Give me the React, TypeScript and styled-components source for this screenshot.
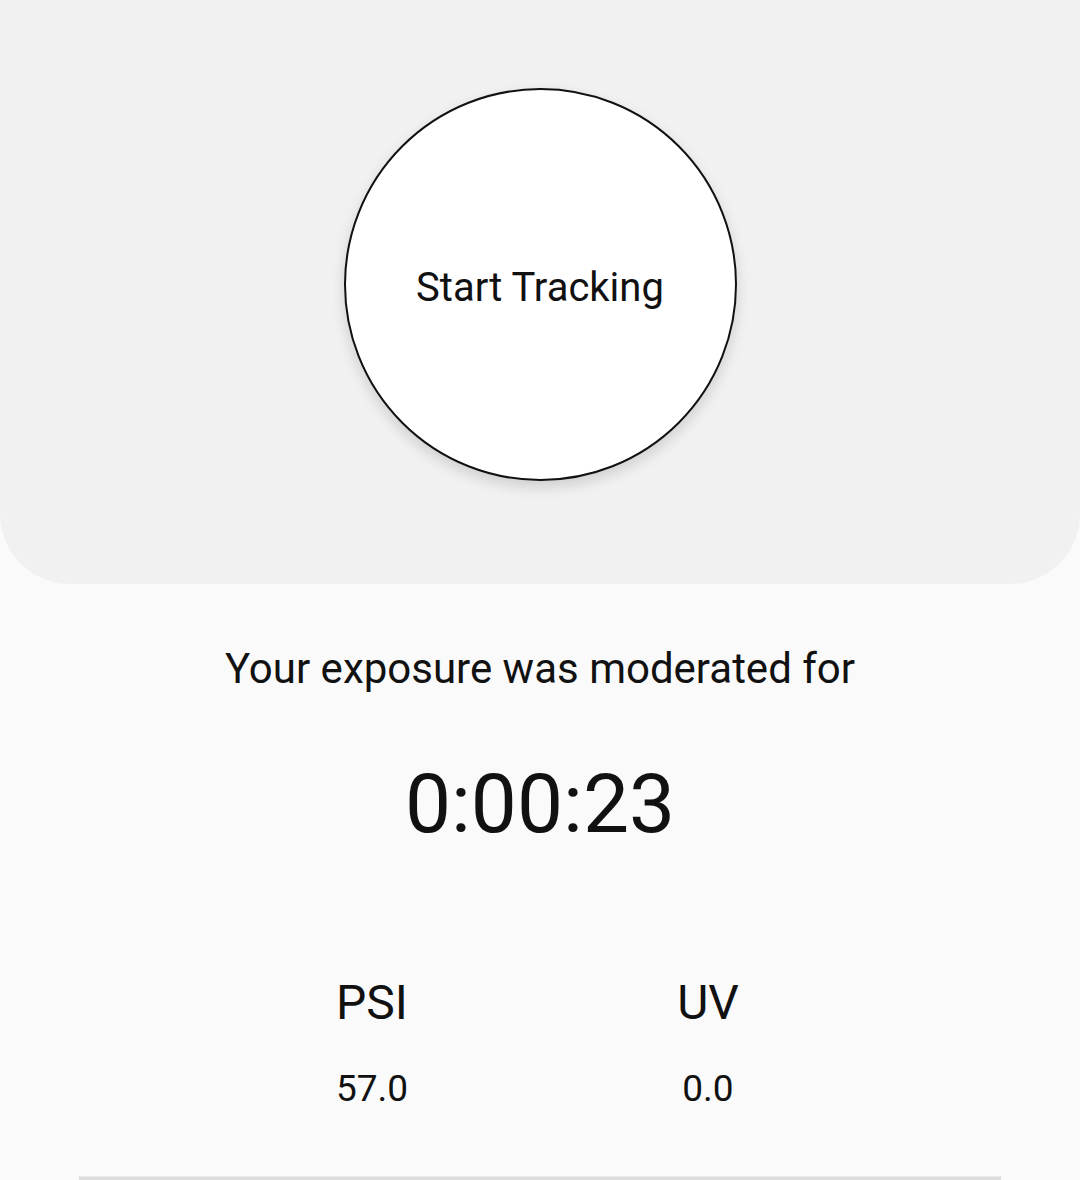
import React from "react";
import styled, { createGlobalStyle } from "styled-components";

const Global = createGlobalStyle`
  html, body { margin: 0; padding: 0; background: #fafafa; }
  body { font-family: Roboto, "Noto Sans", sans-serif; color: #111; }
`;

const Page = styled.div`
  width: 1080px;
  height: 1180px;
  display: flex;
  flex-direction: column;
  background: #fafafa;
  overflow: hidden;
`;

const TopPanel = styled.section`
  height: 584px;
  background: #f1f1f1;
  border-radius: 0 0 70px 70px;
  display: flex;
  justify-content: center;
  padding-top: 88px;
  box-sizing: border-box;
`;

const StartButton = styled.button`
  width: 393px;
  height: 393px;
  border-radius: 50%;
  background: #fff;
  border: 2px solid #111;
  box-shadow: 0 6px 14px rgba(0, 0, 0, 0.14);
  font-family: Roboto, sans-serif;
  font-size: 40px;
  color: #111;
  padding: 6px 0 0;
  cursor: pointer;
`;

const Message = styled.p`
  margin: 60px 0 0;
  text-align: center;
  font-size: 42px;
  line-height: 50px;
  color: #111;
`;

const Timer = styled.div`
  margin-top: 62px;
  text-align: center;
  font-size: 82px;
  line-height: 96px;
  color: #111;
`;

const Stats = styled.div`
  margin-top: 123px;
  display: flex;
  justify-content: center;
`;

const Stat = styled.div`
  width: 336px;
  display: flex;
  flex-direction: column;
  align-items: center;
`;

const StatLabel = styled.div`
  font-size: 48px;
  line-height: 56px;
  color: #111;
`;

const StatValue = styled.div`
  margin-top: 36px;
  font-size: 37px;
  line-height: 44px;
  color: #111;
`;

const Spacer = styled.div`
  flex: 1;
`;

const BottomRule = styled.div`
  margin: 0 79px;
  height: 3px;
  border-top: 1px solid #ececec;
  background: #dcdcdc;
`;

export default function App() {
  return (
    <Page>
      <Global />
      <TopPanel>
        <StartButton>Start Tracking</StartButton>
      </TopPanel>
      <Message>Your exposure was moderated for</Message>
      <Timer>0:00:23</Timer>
      <Stats>
        <Stat>
          <StatLabel>PSI</StatLabel>
          <StatValue>57.0</StatValue>
        </Stat>
        <Stat>
          <StatLabel>UV</StatLabel>
          <StatValue>0.0</StatValue>
        </Stat>
      </Stats>
      <Spacer />
      <BottomRule />
    </Page>
  );
}
